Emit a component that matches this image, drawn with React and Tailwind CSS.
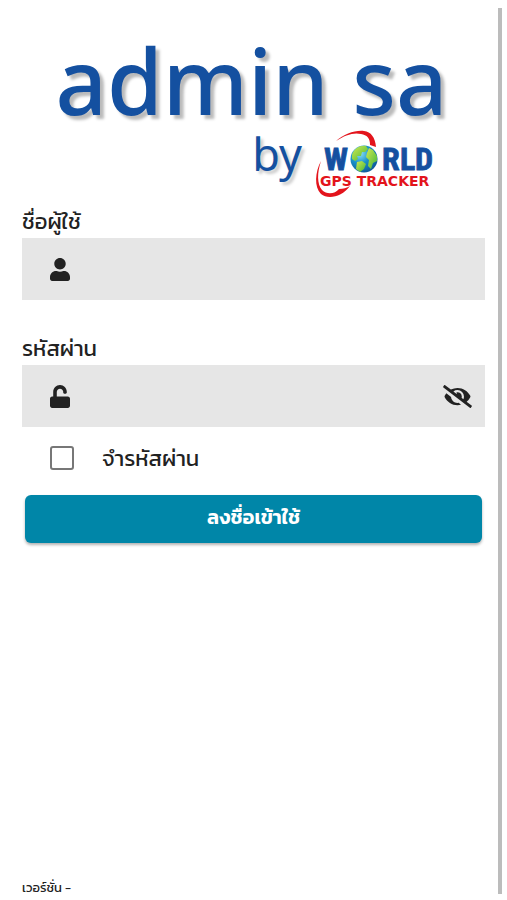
import { useState } from 'react';
import { FaUser, FaUnlock, FaEye, FaEyeSlash } from 'react-icons/fa';

function WorldLogo() {
  return (
    <svg viewBox="0 0 128 72" className="h-[72px] w-32" role="img" aria-label="World GPS Tracker">
      <defs>
        <radialGradient id="sea" cx="0.35" cy="0.3" r="0.8">
          <stop offset="0" stopColor="#8fe3f5" />
          <stop offset="0.45" stopColor="#1b93c9" />
          <stop offset="1" stopColor="#0a4f92" />
        </radialGradient>
        <linearGradient id="land" x1="0" y1="0" x2="1" y2="1">
          <stop offset="0" stopColor="#d4ea50" />
          <stop offset="1" stopColor="#3fb53a" />
        </linearGradient>
      </defs>
      {/* orbit */}
      <path d="M26 13 C34 6 45 2 54 3 C61 4 65 9 66 19 L60 17 C60 10 57 7 51 6 C44 4 35 7 26 13Z" fill="#e3141c" />
      <path d="M11 33 C5 44 4 59 11 66 C18 72 32 69 40 58 C37 60 33 61 29 61 C25 66 17 67 12 62 C7 56 7 45 11 33Z" fill="#e3141c" />
      <circle cx="54" cy="31" r="13.5" fill="url(#sea)" />
      <path d="M42 27 C44 20 51 17 56 18 L58 21 L55 24 L52 24 L51 28 L47 28 L48 31 L45 33 L42 31Z" fill="url(#land)" />
      <path d="M47 34 L52 33 L56 36 L54 41 L50 44 L46 41Z" fill="url(#land)" />
      <path d="M59 20 L63 22 L67 28 L67 33 L63 35 L61 41 L58 38 L59 32 L56 29 L57 25Z" fill="url(#land)" />
      <g fill="#1450a0" stroke="#1450a0" strokeWidth="0.8" fontSize="32" fontWeight="700" fontFamily="'Liberation Sans Narrow', 'Roboto Condensed', 'Liberation Sans', sans-serif">
        <text x="14" y="42">W</text>
        <text x="72" y="42">R</text>
        <text x="90" y="42">L</text>
        <text x="105" y="42">D</text>
      </g>
      <text x="10" y="58" fill="#e3141c" fontSize="14" fontWeight="700" fontFamily="'DejaVu Sans', sans-serif">GPS TRACKER</text>
    </svg>
  );
}

function Field({ id, label, icon: Icon, type, children }) {
  return (
    <div>
      <label htmlFor={id} className="block text-[22px] leading-8">{label}</label>
      <div className="flex h-[62px] items-center bg-[#e6e6e6] pr-[13px] pl-7">
        <Icon className="h-[23px] w-5 shrink-0 text-[#222]" />
        <input id={id} type={type} className="h-full min-w-0 flex-1 bg-transparent px-5 text-xl outline-none" />
        {children}
      </div>
    </div>
  );
}

export default function App() {
  const [visible, setVisible] = useState(false);

  return (
    <div className="flex min-h-screen bg-white pt-2 pr-[5px] pb-[6px] font-['Kanit','Prompt','Noto_Sans_Thai','Noto_Sans',sans-serif] text-[#222]">
      <main className="flex flex-1 flex-col border-r-4 border-[#bcbcbc] pr-[13px] pl-[22px]">
        <header className="flex flex-col items-center pt-6 font-['Noto_Sans',sans-serif] text-[#1450a0]">
          <h1 className="pr-1 text-[90px] leading-[96px] font-medium whitespace-nowrap [text-shadow:4px_4px_3px_#bbb]">admin sa</h1>
          <div className="flex w-full items-start justify-end gap-2 pr-[47px]">
            <span className="text-[45px] leading-[52px] [text-shadow:3px_3px_3px_#ccc]">by</span>
            <WorldLogo />
          </div>
        </header>

        <form className="flex flex-col" onSubmit={(e) => e.preventDefault()}>
          <div className="flex flex-col gap-[33px] pt-[6px]">
            <Field id="username" label="ชื่อผู้ใช้" icon={FaUser} type="text" />
            <Field id="password" label="รหัสผ่าน" icon={FaUnlock} type={visible ? 'text' : 'password'}>
              <button type="button" aria-label="แสดงรหัสผ่าน" onClick={() => setVisible(!visible)}>
                {visible ? <FaEye className="h-[23px] w-[29px]" /> : <FaEyeSlash className="h-[23px] w-[29px]" />}
              </button>
            </Field>
          </div>

          <div className="flex h-[62px] items-center gap-7 pl-7">
            <input id="remember" type="checkbox" className="size-6 appearance-none rounded-[3px] border-2 border-[#777] bg-white checked:bg-[#0086a8]" />
            <label htmlFor="remember" className="text-[22px]">จำรหัสผ่าน</label>
          </div>

          <button type="submit" className="mx-[3px] mt-[6px] h-12 rounded-md bg-[#0086a8] pb-1 text-xl font-semibold text-white shadow-[0_2px_3px_rgba(0,0,0,0.3)]">
            ลงชื่อเข้าใช้
          </button>
        </form>

        <footer className="mt-auto text-[13px] leading-3">เวอร์ชั่น -</footer>
      </main>
    </div>
  );
}
